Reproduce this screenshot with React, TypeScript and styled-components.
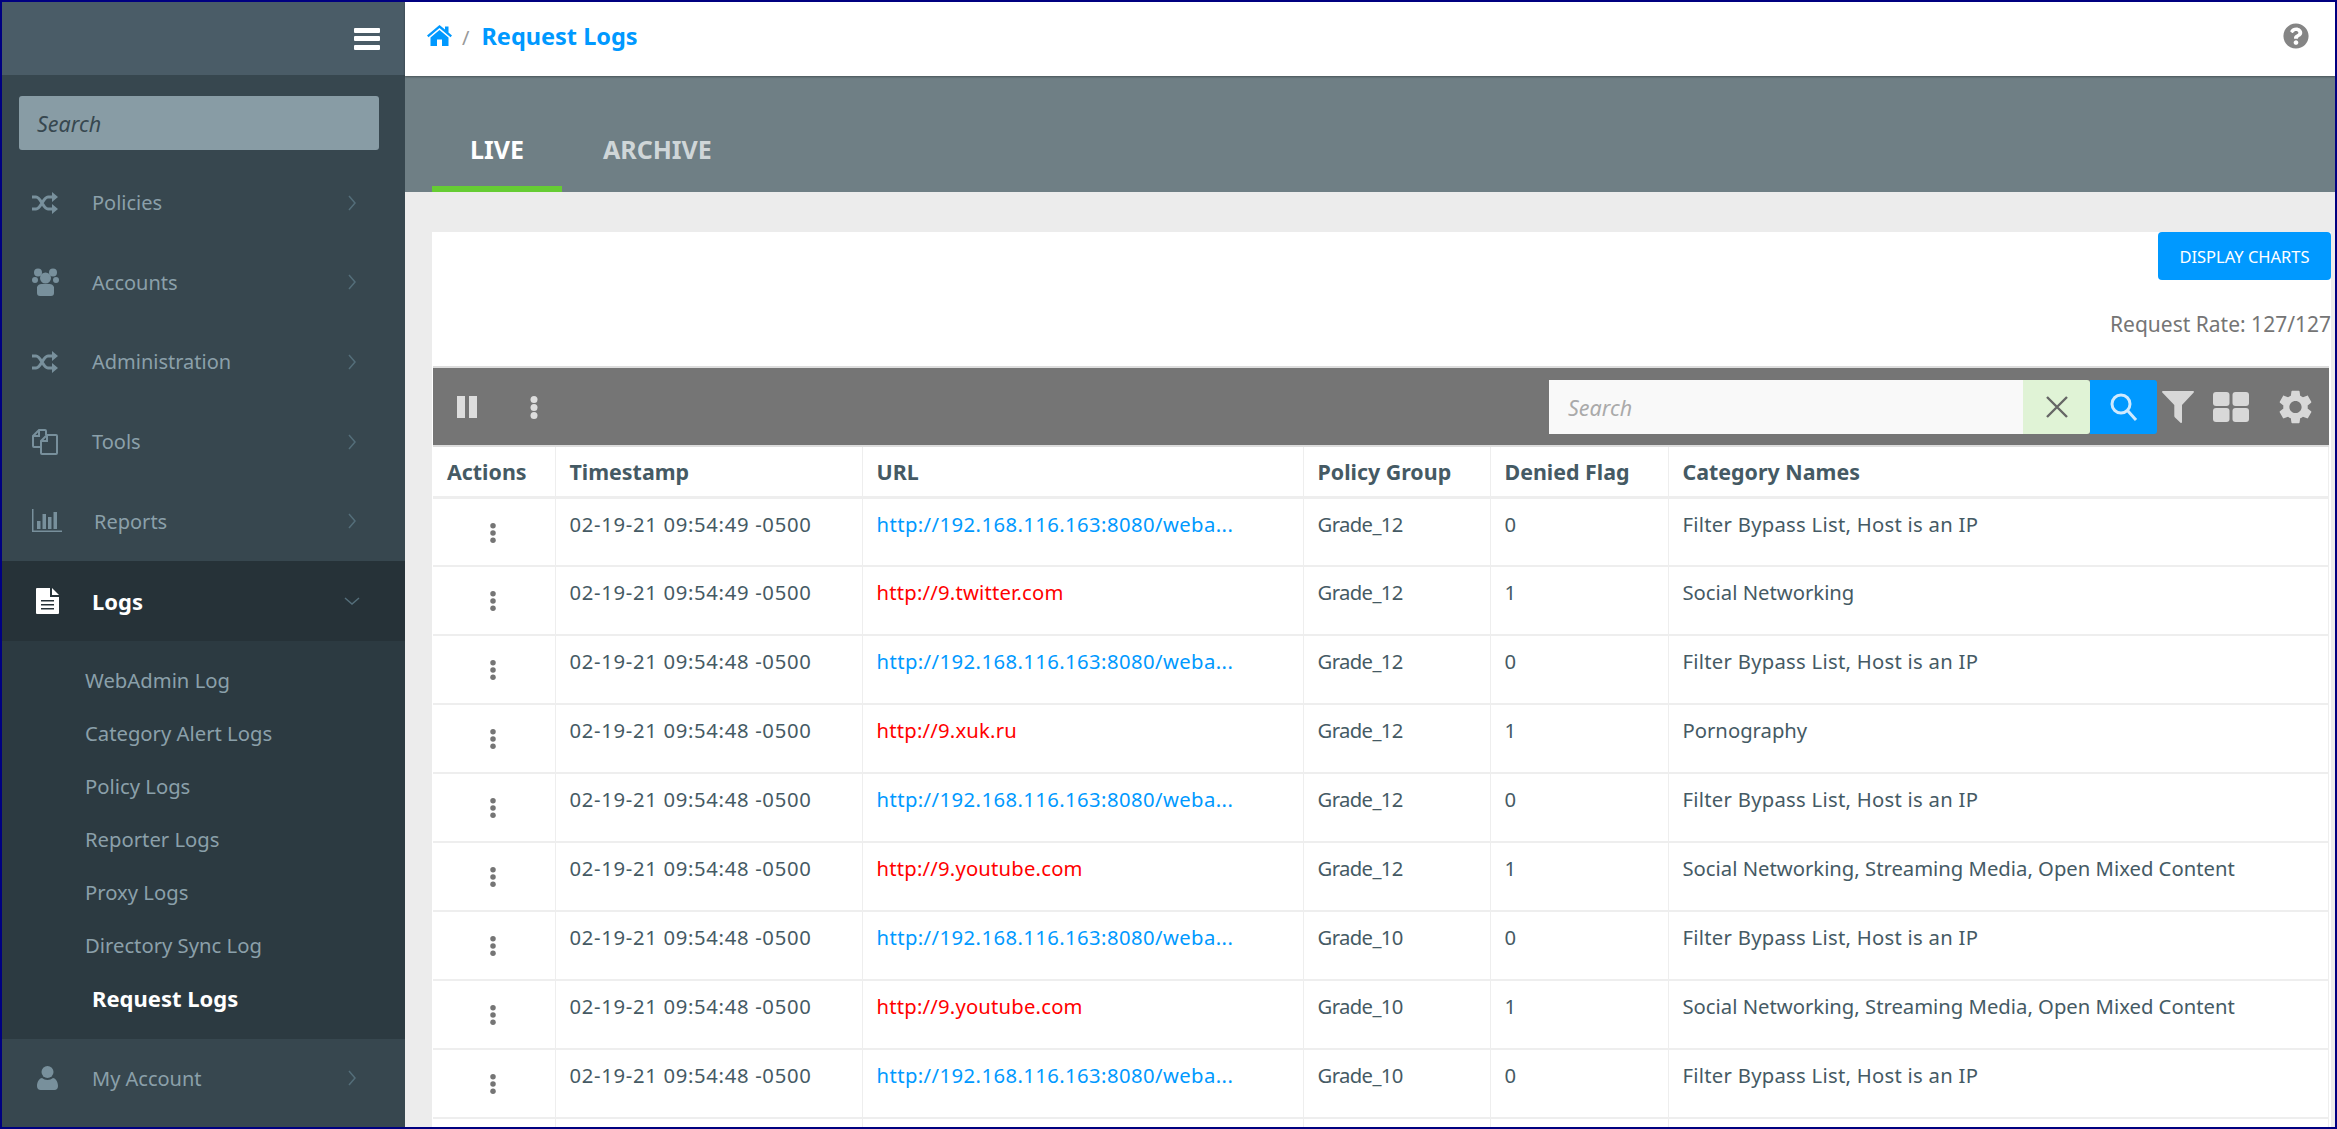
import React, { FC } from 'react';
import styled, { createGlobalStyle } from 'styled-components';
import { FaQuestionCircle } from 'react-icons/fa';

const GlobalStyle = createGlobalStyle`
  * { box-sizing: border-box; }
  html, body { margin: 0; padding: 0; background: #fff; }
  body { font-family: "Noto Sans", "DejaVu Sans", sans-serif; }
`

const Page = styled.div`
  width: 2337px;
  height: 1129px;
  border: 2px solid #000080;
  display: flex;
  overflow: hidden;
`

const Sidebar = styled.aside`
  width: 403px;
  flex: none;
  background: #37474f;
  display: flex;
  flex-direction: column;
`
const SideHeader = styled.div`
  height: 73px;
  background: #4a5c67;
  display: flex;
  align-items: center;
  justify-content: flex-end;
  padding-right: 25px;
`
const Burger = styled.div`
  width: 26px;
  height: 22px;
  display: flex;
  flex-direction: column;
  justify-content: space-between;
  span {
    display: block;
    height: 5px;
    background: #fff;
    border-radius: 1px;
  }
`
const SideSearchWrap = styled.div`
  padding: 21px 26px 13px 17px;
`
const SideSearch = styled.div`
  height: 54px;
  background: #889ca5;
  border-radius: 3px;
  padding-left: 18px;
  display: flex;
  align-items: center;
  font-size: 21.5px;
  font-style: italic;
  color: #37474f;
`
const MenuItem = styled.div<{ $active?: boolean; $textGap?: number }>`
  height: 79.6px;
  display: flex;
  align-items: center;
  padding-left: 30px;
  background: ${p => (p.$active ? '#263238' : 'transparent')};
  color: ${p => (p.$active ? '#fff' : '#8ba0aa')};
  font-size: ${p => (p.$active ? 22 : 20)}px;
  font-weight: ${p => (p.$active ? 700 : 400)};
  span.label {
    margin-left: ${p => p.$textGap ?? 0}px;
    flex: 1;
  }
`
const MenuIcon = styled.div<{ $left?: number }>`
  width: 60px;
  flex: none;
  display: flex;
  align-items: center;
  padding-left: ${p => p.$left ?? 0}px;
`
const IconSvg = styled.svg`
  fill: #78909c;
  display: block;
`
const Chevron = styled.svg`
  width: 20px;
  height: 20px;
  margin-right: 43px;
  fill: none;
  stroke: #546e7a;
  stroke-width: 1.5;
`
const SubMenu = styled.div`
  background: #2c3a41;
  padding: 12.5px 0 14.5px 83px;
`
const SubItem = styled.div<{ $active?: boolean }>`
  height: 53px;
  display: flex;
  align-items: center;
  font-size: ${p => (p.$active ? 22 : 20.25)}px;
  color: ${p => (p.$active ? '#fff' : '#8ba0aa')};
  font-weight: ${p => (p.$active ? 700 : 400)};
  padding-left: ${p => (p.$active ? 7 : 0)}px;
`

const Main = styled.main`
  flex: 1;
  min-width: 0;
  display: flex;
  flex-direction: column;
  background: #ececec;
`
const TopBar = styled.header`
  height: 74px;
  flex: none;
  background: #fff;
  display: flex;
  align-items: center;
  padding: 0 26px 7px 22px;
  box-shadow: 0 1px 2px rgba(0, 0, 0, 0.35);
  position: relative;
`
const Crumb = styled.div`
  display: flex;
  align-items: center;
  flex: 1;
  color: #0099ff;
  font-size: 23.5px;
  font-weight: 700;
`
const Slash = styled.span`
  color: #999;
  font-size: 20px;
  font-weight: 400;
  margin: 4px 12px 0 10px;
`
const HelpIcon = styled(FaQuestionCircle)`
  font-size: 26px;
  color: #858585;
`
const TabBand = styled.div`
  height: 116px;
  flex: none;
  background: #6f7f85;
  display: flex;
  align-items: flex-end;
  padding-left: 27px;
`
const Tab = styled.div<{ $active?: boolean }>`
  height: 68px;
  padding: 0 38px 13px;
  margin-right: 3px;
  display: flex;
  align-items: center;
  font-size: 25px;
  font-weight: 700;
  color: ${p => (p.$active ? '#fff' : '#cfd6d8')};
  border-bottom: 6px solid ${p => (p.$active ? '#66cc33' : 'transparent')};
`
const Content = styled.div`
  flex: 1;
  min-height: 0;
  padding: 40px 4px 0 27px;
`
const Panel = styled.section`
  background: #fff;
  height: 100%;
  display: flex;
  flex-direction: column;
  overflow: hidden;
`
const PanelTop = styled.div`
  height: 134px;
  flex: none;
  display: flex;
  flex-direction: column;
  align-items: flex-end;
`
const ChartsButton = styled.button`
  width: 173px;
  height: 48px;
  border: 0;
  border-radius: 4px;
  background: #0099ff;
  color: #fff;
  font-family: inherit;
  font-size: 16.5px;
  padding: 0;
`
const RequestRate = styled.div`
  margin-top: 30px;
  font-size: 21px;
  line-height: 28px;
  color: #757575;
`
const Grid = styled.div`
  flex: 1;
  min-height: 0;
  margin: 0 2px 0 1px;
  border-top: 2px solid #ddd;
`
const Toolbar = styled.div`
  height: 79px;
  background: #757575;
  display: flex;
  align-items: center;
  padding: 0 17px 0 24px;
  border-bottom: 2px solid #ddd;
`
const ToolSpacer = styled.div`
  flex: 1;
`
const PauseIcon = styled.svg`
  width: 20px;
  height: 22px;
  fill: #ddd;
  margin-right: 53px;
`
const ToolDots = styled.div`
  margin-top: 2px;
`
const Kebab = styled.svg<{ $color: string; $h: number }>`
  width: 8px;
  height: ${p => p.$h}px;
  fill: ${p => p.$color};
  display: block;
`
const SearchBox = styled.div`
  width: 474px;
  height: 54px;
  background: #f9f9f9;
  padding: 2px 0 0 19px;
  display: flex;
  align-items: center;
  font-size: 21.5px;
  font-style: italic;
  color: #aaa;
`
const ClearButton = styled.div`
  width: 67px;
  height: 54px;
  background: #e0f3d6;
  border-radius: 0 3px 3px 0;
  display: flex;
  align-items: center;
  justify-content: center;
`
const SearchButton = styled.div`
  width: 67px;
  height: 54px;
  background: #0099ff;
  border-radius: 0 3px 3px 0;
  display: flex;
  align-items: center;
  justify-content: center;
`
const ToolIcon = styled.div<{ $left: number }>`
  margin-left: ${p => p.$left}px;
  color: #d8d8d8;
  display: flex;
  align-items: center;
`
const Table = styled.table`
  width: 100%;
  table-layout: fixed;
  border-collapse: collapse;
  background: #fff;
`
const Col = styled.col<{ $w?: number }>`
  width: ${p => (p.$w ? `${p.$w}px` : 'auto')};
`
const Th = styled.th`
  height: 50px;
  text-align: left;
  padding: 0 14px;
  font-size: 21.4px;
  font-weight: 700;
  color: #455a64;
  border-right: 1px solid #eee;
  border-bottom: 3px solid #eee;
  white-space: nowrap;
`
const Td = styled.td<{ $color?: string; $ls?: number }>`
  height: 69px;
  padding: 15px 14px 0;
  vertical-align: top;
  font-size: 20.25px;
  line-height: 20px;
  letter-spacing: ${p => p.$ls ?? 0}px;
  color: ${p => p.$color ?? '#455a64'};
  border-right: 1px solid #eee;
  border-bottom: 2px solid #eee;
  white-space: nowrap;
  overflow: hidden;
`
const ActionCell = styled(Td)`
  padding: 23px 0 0 56px;
`

const Dots: FC<{ color: string; h: number; r: number }> = ({ color, h, r }) => (
    <Kebab $color={color} $h={h} viewBox="0 0 8 24">
        <circle cx="4" cy="4" r={r}/>
        <circle cx="4" cy="12" r={r}/>
        <circle cx="4" cy="20" r={r}/>
    </Kebab>
)

const Arrow: FC<{ open?: boolean }> = ({ open }) => (
    <Chevron viewBox="0 0 20 20">
        <polyline points={open ? '3,7 10,13 17,7' : '7,3 13,10 7,17'}/>
    </Chevron>
)

const ShuffleIcon = () => (
    <svg width="26" height="22" viewBox="0 0 26 22" fill="none" stroke="#78909c" strokeWidth="3">
        <path d="M0 5h4c5 0 7 12 12 12h5M0 17h4c5 0 7-12 12-12h5"/>
        <path d="M20 0l6 5-6 5zM20 12l6 5-6 5z" fill="#78909c" stroke="none"/>
    </svg>
)

const UsersIcon = () => (
    <IconSvg width="27" height="28" viewBox="0 0 27 28">
        <circle cx="6" cy="4.5" r="4"/>
        <circle cx="21" cy="4.5" r="4"/>
        <circle cx="3" cy="12" r="3"/>
        <circle cx="24" cy="12" r="3"/>
        <circle cx="13.5" cy="10" r="5.5"/>
        <path d="M5 19a5 5 0 0 1 5-3h7a5 5 0 0 1 5 3v6a3 3 0 0 1-3 3H8a3 3 0 0 1-3-3z"/>
    </IconSvg>
)

const FilesIcon = () => (
    <svg width="26" height="26" viewBox="0 0 26 26" fill="none" stroke="#78909c" strokeWidth="2">
        <path d="M9 18H2a1 1 0 0 1-1-1V7l6-6h6a1 1 0 0 1 1 1v4M7 1v6H1"/>
        <path d="M10 25a1 1 0 0 1-1-1V12l6-6h9a1 1 0 0 1 1 1v17a1 1 0 0 1-1 1zM15 6v6H9"/>
    </svg>
)

const BarChartIcon = () => (
    <IconSvg width="30" height="24" viewBox="0 0 30 24">
        <path d="M0 0h1.5v21.5H30V23H0z"/>
        <rect x="5" y="12" width="3.5" height="8"/>
        <rect x="10.5" y="5" width="3.5" height="15"/>
        <rect x="16" y="8" width="3.5" height="12"/>
        <rect x="21.5" y="3" width="3.5" height="17"/>
    </IconSvg>
)

const FileIcon = () => (
    <svg width="23" height="26" viewBox="0 0 23 26" fill="#fff">
        <path fillRule="evenodd" d="M1 0h13v9h9v16a1 1 0 0 1-1 1H1a1 1 0 0 1-1-1V1a1 1 0 0 1 1-1zM5 12v1.5h13V12zM5 16v1.5h13V16zM5 20v1.5h13V20z"/>
        <path d="M16 0l7 7h-7z"/>
    </svg>
)

const UserIcon = () => (
    <IconSvg width="21" height="24" viewBox="0 0 21 24">
        <circle cx="10.5" cy="6" r="6"/>
        <path d="M0 20c0-5 3-8 5-8 1.500 1 3.500 2 5.500 2s4-1 5.500-2c2 0 5 3 5 8 0 2.500-1.500 4-3.500 4h-14C1.500 24 0 22.500 0 20z"/>
    </IconSvg>
)

const HomeIcon = () => (
    <svg width="25" height="21" viewBox="0 0 25 21" fill="#0099ff">
        <path d="M12.500 0L18 4.600V1.500h3.500v6L25 10.500l-1.500 1.700L12.500 3 1.500 12.200 0 10.500z"/>
        <path d="M12.500 5L21.500 12.500V21H15v-6.500h-5V21H3.500v-8.500z"/>
    </svg>
)

const FilterIcon = () => (
    <svg width="32" height="32" viewBox="0 0 32 32" fill="#d8d8d8">
        <path d="M1 0h30c1 0 1.300.8.7 1.500L20 14v17c0 1-.8 1.300-1.500.7L13 26.500c-.500-.4-.7-.8-.7-1.500V14L.3 1.500C-.3.800 0 0 1 0z"/>
    </svg>
)

const GearIcon = () => (
    <svg width="33" height="34" viewBox="2.500 2 19 20" fill="#d8d8d8">
        <path d="M19.140 12.940c.040-.300.060-.610.060-.940 0-.320-.020-.640-.070-.940l2.030-1.580c.180-.140.230-.410.120-.610l-1.920-3.320c-.120-.220-.370-.290-.590-.220l-2.390.960c-.500-.380-1.030-.700-1.620-.940l-.360-2.540c-.040-.240-.240-.410-.480-.410h-3.840c-.240 0-.430.170-.470.410l-.360 2.540c-.590.240-1.130.570-1.620.940l-2.390-.960c-.220-.080-.470 0-.590.220L2.740 8.870c-.120.210-.080.470.120.610l2.030 1.580c-.050.300-.090.630-.090.940s.020.640.070.940l-2.030 1.580c-.180.140-.230.410-.120.610l1.920 3.320c.120.220.370.290.590.220l2.390-.960c.500.380 1.030.700 1.620.940l.360 2.540c.050.240.240.410.480.410h3.840c.240 0 .440-.170.470-.410l.360-2.540c.590-.240 1.130-.560 1.620-.94l2.390.960c.220.080.470 0 .590-.220l1.920-3.320c.120-.220.070-.470-.120-.610l-2.010-1.580zM12 15.600c-1.980 0-3.600-1.620-3.600-3.600s1.620-3.600 3.600-3.600 3.600 1.620 3.600 3.600-1.620 3.600-3.600 3.600z"/>
    </svg>
)

const BYPASS = 'Filter Bypass List, Host is an IP'
const LOCAL_URL = 'http://192.168.116.163:8080/weba...'
const MIXED = 'Social Networking, Streaming Media, Open Mixed Content'

const rows = [
    { time: '02-19-21 09:54:49 -0500', url: LOCAL_URL, group: 'Grade_12', flag: 0, cat: BYPASS },
    { time: '02-19-21 09:54:49 -0500', url: 'http://9.twitter.com', group: 'Grade_12', flag: 1, cat: 'Social Networking' },
    { time: '02-19-21 09:54:48 -0500', url: LOCAL_URL, group: 'Grade_12', flag: 0, cat: BYPASS },
    { time: '02-19-21 09:54:48 -0500', url: 'http://9.xuk.ru', group: 'Grade_12', flag: 1, cat: 'Pornography' },
    { time: '02-19-21 09:54:48 -0500', url: LOCAL_URL, group: 'Grade_12', flag: 0, cat: BYPASS },
    { time: '02-19-21 09:54:48 -0500', url: 'http://9.youtube.com', group: 'Grade_12', flag: 1, cat: MIXED },
    { time: '02-19-21 09:54:48 -0500', url: LOCAL_URL, group: 'Grade_10', flag: 0, cat: BYPASS },
    { time: '02-19-21 09:54:48 -0500', url: 'http://9.youtube.com', group: 'Grade_10', flag: 1, cat: MIXED },
    { time: '02-19-21 09:54:48 -0500', url: LOCAL_URL, group: 'Grade_10', flag: 0, cat: BYPASS },
    { time: '', url: '', group: '', flag: '', cat: '' },
]

const subItems = ['WebAdmin Log', 'Category Alert Logs', 'Policy Logs', 'Reporter Logs', 'Proxy Logs', 'Directory Sync Log']

const App: FC = () => {
    return (
        <Page>
            <GlobalStyle/>
            <Sidebar>
                <SideHeader>
                    <Burger><span/><span/><span/></Burger>
                </SideHeader>
                <SideSearchWrap>
                    <SideSearch>Search</SideSearch>
                </SideSearchWrap>
                <MenuItem>
                    <MenuIcon><ShuffleIcon/></MenuIcon><span className="label">Policies</span><Arrow/>
                </MenuItem>
                <MenuItem>
                    <MenuIcon><UsersIcon/></MenuIcon><span className="label">Accounts</span><Arrow/>
                </MenuItem>
                <MenuItem>
                    <MenuIcon><ShuffleIcon/></MenuIcon><span className="label">Administration</span><Arrow/>
                </MenuItem>
                <MenuItem>
                    <MenuIcon><FilesIcon/></MenuIcon><span className="label">Tools</span><Arrow/>
                </MenuItem>
                <MenuItem $textGap={2}>
                    <MenuIcon><BarChartIcon/></MenuIcon><span className="label">Reports</span><Arrow/>
                </MenuItem>
                <MenuItem $active>
                    <MenuIcon $left={4}><FileIcon/></MenuIcon><span className="label">Logs</span><Arrow open/>
                </MenuItem>
                <SubMenu>
                    {subItems.map(item => <SubItem key={item}>{item}</SubItem>)}
                    <SubItem $active>Request Logs</SubItem>
                </SubMenu>
                <MenuItem>
                    <MenuIcon $left={5}><UserIcon/></MenuIcon><span className="label">My Account</span><Arrow/>
                </MenuItem>
            </Sidebar>
            <Main>
                <TopBar>
                    <Crumb>
                        <HomeIcon/>
                        <Slash>/</Slash>
                        Request Logs
                    </Crumb>
                    <HelpIcon/>
                </TopBar>
                <TabBand>
                    <Tab $active>LIVE</Tab>
                    <Tab>ARCHIVE</Tab>
                </TabBand>
                <Content>
                    <Panel>
                        <PanelTop>
                            <ChartsButton>DISPLAY CHARTS</ChartsButton>
                            <RequestRate>Request Rate: 127/127</RequestRate>
                        </PanelTop>
                        <Grid>
                            <Toolbar>
                                <PauseIcon viewBox="0 0 20 22">
                                    <rect x="0" y="0" width="8" height="22"/>
                                    <rect x="12" y="0" width="8" height="22"/>
                                </PauseIcon>
                                <ToolDots><Dots color="#ddd" h={25} r={3.5}/></ToolDots>
                                <ToolSpacer/>
                                <SearchBox>Search</SearchBox>
                                <ClearButton>
                                    <svg width="24" height="24" viewBox="0 0 24 24" stroke="#666" strokeWidth="2.4">
                                        <path d="M2 2l20 20M22 2L2 22"/>
                                    </svg>
                                </ClearButton>
                                <SearchButton>
                                    <svg width="30" height="30" viewBox="0 0 30 30" fill="none" stroke="#cfeaff" strokeWidth="3">
                                        <circle cx="12" cy="12" r="9"/>
                                        <path d="M18.5 18.5L27 28"/>
                                    </svg>
                                </SearchButton>
                                <ToolIcon $left={5}><FilterIcon/></ToolIcon>
                                <ToolIcon $left={19}>
                                    <svg width="36" height="30" viewBox="0 0 36 30" fill="#d8d8d8">
                                        <rect x="0" y="0" width="16.5" height="14" rx="3"/>
                                        <rect x="19.5" y="0" width="16.5" height="14" rx="3"/>
                                        <rect x="0" y="16" width="16.5" height="14" rx="3"/>
                                        <rect x="19.5" y="16" width="16.5" height="14" rx="3"/>
                                    </svg>
                                </ToolIcon>
                                <ToolIcon $left={30}><GearIcon/></ToolIcon>
                            </Toolbar>
                            <Table>
                                <colgroup>
                                    <Col $w={122}/>
                                    <Col $w={307}/>
                                    <Col $w={441}/>
                                    <Col $w={187}/>
                                    <Col $w={178}/>
                                    <Col/>
                                </colgroup>
                                <thead>
                                    <tr>
                                        <Th>Actions</Th>
                                        <Th>Timestamp</Th>
                                        <Th>URL</Th>
                                        <Th>Policy Group</Th>
                                        <Th>Denied Flag</Th>
                                        <Th>Category Names</Th>
                                    </tr>
                                </thead>
                                <tbody>
                                    {rows.map((row, i) => (
                                        <tr key={i}>
                                            <ActionCell as="td">{row.time && <Dots color="#757575" h={22} r={3}/>}</ActionCell>
                                            <Td $ls={0.68}>{row.time}</Td>
                                            <Td $color={row.flag === 1 ? '#ff0000' : '#0099ff'} $ls={row.url === LOCAL_URL ? 0.42 : 0.2}>{row.url}</Td>
                                            <Td $ls={-0.6}>{row.group}</Td>
                                            <Td>{row.flag}</Td>
                                            <Td $ls={row.cat === BYPASS ? 0.27 : 0}>{row.cat}</Td>
                                        </tr>
                                    ))}
                                </tbody>
                            </Table>
                        </Grid>
                    </Panel>
                </Content>
            </Main>
        </Page>
    );
};

export default App;
